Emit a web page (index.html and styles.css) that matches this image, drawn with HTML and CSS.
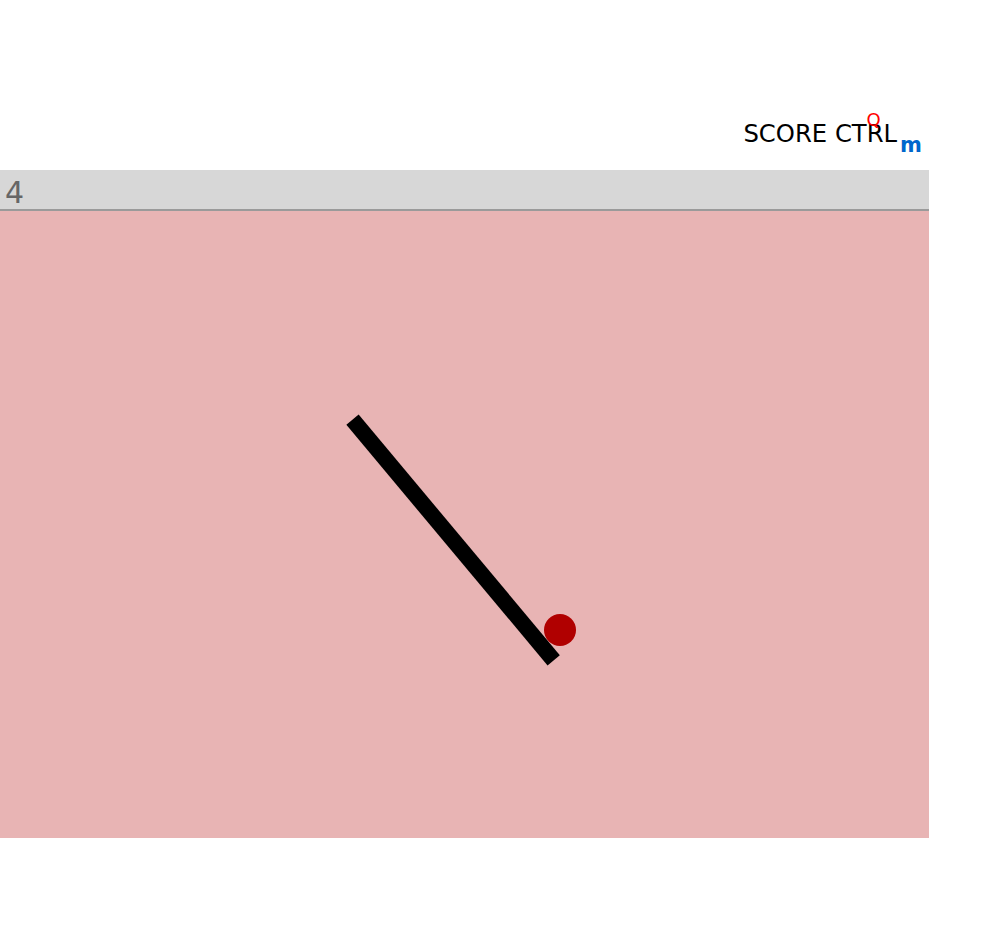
FILE: index.html
```html
<!DOCTYPE html>
<html>
<head>
<meta charset="utf-8">
<link rel="stylesheet" href="styles.css">
</head>
<body>
<div class="page">
  <header class="top">
    <div class="title">
      <span class="label">SCORE CTRL</span>
      <span class="q">Q</span>
      <span class="m">m</span>
    </div>
  </header>
  <div class="bar"><span class="num">4</span></div>
  <div class="field">
    <svg class="canvas" width="929" height="627" viewBox="0 0 929 627">
      <line x1="352.5" y1="208.7" x2="553.7" y2="449.3" stroke="#000" stroke-width="16"/>
      <circle cx="560" cy="419" r="16" fill="#b00000"/>
    </svg>
  </div>
</div>
</body>
</html>
```

FILE: styles.css
```css
html, body {
  margin: 0;
  padding: 0;
  background: #fff;
}
.page {
  width: 929px;
  font-family: "DejaVu Sans", sans-serif;
}
.top {
  height: 170px;
  display: flex;
  justify-content: flex-end;
  align-items: flex-end;
}
.title {
  position: relative;
  display: flex;
  align-items: baseline;
  padding-right: 7px;
  padding-bottom: 22px;
}
.label {
  font-size: 24.3px;
  color: #000;
}
.q {
  position: absolute;
  left: 123px;
  top: -10px;
  font-size: 18px;
  color: #ff0000;
}
.m {
  font-size: 21px;
  font-weight: bold;
  color: #0066cc;
  margin-left: 3px;
  position: relative;
  top: 10px;
}
.bar {
  height: 39px;
  background: #d7d7d7;
  border-bottom: 2px solid #9a9a9a;
  display: flex;
  align-items: center;
  padding-left: 5px;
}
.num {
  font-size: 30px;
  color: #666;
  line-height: 1;
  position: relative;
  top: 3px;
}
.field {
  height: 627px;
  background: #e8b4b4;
}
.canvas {
  display: block;
}
```
